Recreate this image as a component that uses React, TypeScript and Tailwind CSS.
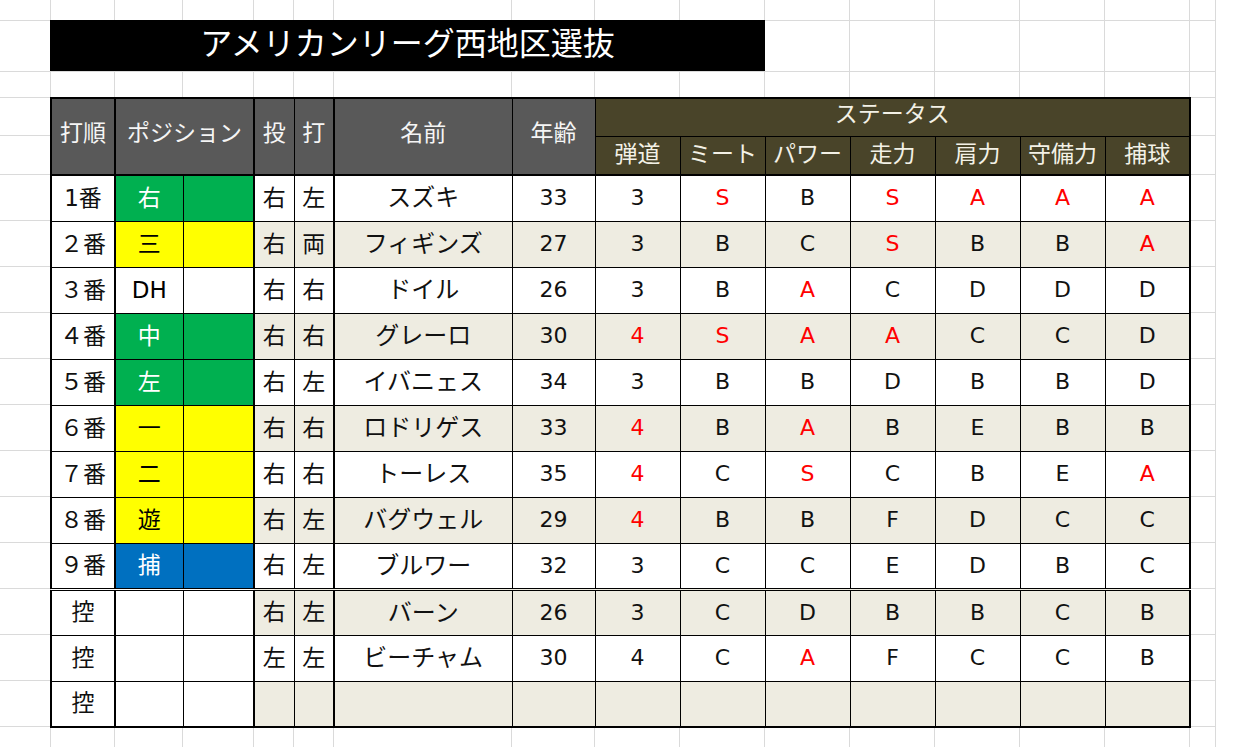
import React from "react";

type Row = {
  order: string;
  pos: string;
  posCls: string;
  th: string;
  bat: string;
  name: string;
  age: string;
  stats: string;
};

const rows: Row[] = [
  { order: "1番", pos: "右", posCls: "bg-[#00b050] text-white", th: "右", bat: "左", name: "スズキ", age: "33", stats: "3 S* B S* A* A* A*" },
  { order: "２番", pos: "三", posCls: "bg-[#ffff00] text-black", th: "右", bat: "両", name: "フィギンズ", age: "27", stats: "3 B C S* B B A*" },
  { order: "３番", pos: "DH", posCls: "bg-white text-black", th: "右", bat: "右", name: "ドイル", age: "26", stats: "3 B A* C D D D" },
  { order: "４番", pos: "中", posCls: "bg-[#00b050] text-white", th: "右", bat: "右", name: "グレーロ", age: "30", stats: "4* S* A* A* C C D" },
  { order: "５番", pos: "左", posCls: "bg-[#00b050] text-white", th: "右", bat: "左", name: "イバニェス", age: "34", stats: "3 B B D B B D" },
  { order: "６番", pos: "一", posCls: "bg-[#ffff00] text-black", th: "右", bat: "右", name: "ロドリゲス", age: "33", stats: "4* B A* B E B B" },
  { order: "７番", pos: "二", posCls: "bg-[#ffff00] text-black", th: "右", bat: "右", name: "トーレス", age: "35", stats: "4* C S* C B E A*" },
  { order: "８番", pos: "遊", posCls: "bg-[#ffff00] text-black", th: "右", bat: "左", name: "バグウェル", age: "29", stats: "4* B B F D C C" },
  { order: "９番", pos: "捕", posCls: "bg-[#0070c0] text-white", th: "右", bat: "左", name: "ブルワー", age: "32", stats: "3 C C E D B C" },
  { order: "控", pos: "", posCls: "bg-white", th: "右", bat: "左", name: "バーン", age: "26", stats: "3 C D B B C B" },
  { order: "控", pos: "", posCls: "bg-white", th: "左", bat: "左", name: "ビーチャム", age: "30", stats: "4 C A* F C C B" },
  { order: "控", pos: "", posCls: "bg-white", th: "", bat: "", name: "", age: "", stats: "" },
];

const colX = [50, 114, 182, 253, 293, 333, 511, 594, 679, 764, 849, 934, 1019, 1104, 1189, 1215];
const rowY = [20, 71, 97, 135, 174, 220, 266, 312, 358, 404, 450, 496, 542, 588, 634, 680, 726, 772];

const subHeads = ["弾道", "ミート", "パワー", "走力", "肩力", "守備力", "捕球"];

function GridLines() {
  return (
    <svg className="absolute inset-0" width={1243} height={747}>
      {colX.map((x) => (
        <line key={"v" + x} x1={x + 0.5} y1={0} x2={x + 0.5} y2={747} stroke="#dadada" strokeWidth={1} />
      ))}
      {rowY.map((y) => (
        <line key={"h" + y} x1={0} y1={y + 0.5} x2={1215} y2={y + 0.5} stroke="#dadada" strokeWidth={1} />
      ))}
    </svg>
  );
}

export default function App() {
  const font = { fontFamily: '"DejaVu Sans", "Noto Sans CJK JP", sans-serif' };
  return (
    <div className="relative w-[1243px] h-[747px] bg-white overflow-hidden text-[#111]" style={font}>
      <GridLines />
      <div className="relative pt-[20px] pl-[50px]">
        <div className="w-[715px] h-[51px] bg-black text-white text-[32px] flex items-center justify-center leading-none pb-[4px]">
          アメリカンリーグ西地区選抜
        </div>
        <table className="mt-[26px] w-[1139px] table-fixed border-collapse border-2 border-black">
          <colgroup>
            <col className="w-[64px]" />
            <col className="w-[68px]" />
            <col className="w-[71px]" />
            <col className="w-[40px]" />
            <col className="w-[40px]" />
            <col className="w-[178px]" />
            <col className="w-[83px]" />
            <col className="w-[85px]" />
            <col className="w-[85px]" />
            <col className="w-[85px]" />
            <col className="w-[85px]" />
            <col className="w-[85px]" />
            <col className="w-[85px]" />
            <col className="w-[85px]" />
          </colgroup>
          <thead className="leading-none">
            <tr className="h-[38px]">
              <th rowSpan={2} className="p-0 bg-[#595959] text-[#f5f5f5] text-[23px] font-normal border border-black border-r-2 border-b-2 pb-[6px] whitespace-nowrap">打順</th>
              <th rowSpan={2} colSpan={2} className="p-0 bg-[#595959] text-[#f5f5f5] text-[23px] font-normal border border-black border-r-2 border-b-2 pb-[6px] whitespace-nowrap">ポジション</th>
              <th rowSpan={2} className="p-0 bg-[#595959] text-[#f5f5f5] text-[23px] font-normal border border-black border-b-2 pb-[6px]">投</th>
              <th rowSpan={2} className="p-0 bg-[#595959] text-[#f5f5f5] text-[23px] font-normal border border-black border-r-2 border-b-2 pb-[6px]">打</th>
              <th rowSpan={2} className="p-0 bg-[#595959] text-[#f5f5f5] text-[23px] font-normal border border-black border-b-2 pb-[6px]">名前</th>
              <th rowSpan={2} className="p-0 bg-[#595959] text-[#f5f5f5] text-[23px] font-normal border border-black border-b-2 pb-[6px]">年齢</th>
              <th colSpan={7} className="p-0 bg-[#494429] text-[#f3f1e6] text-[23px] font-normal border border-black pb-[6px]">ステータス</th>
            </tr>
            <tr className="h-[39px]">
              {subHeads.map((s) => (
                <th key={s} className="p-0 bg-[#494429] text-[#f3f1e6] text-[23px] font-normal border border-black border-b-2 pb-[2px] whitespace-nowrap">{s}</th>
              ))}
            </tr>
          </thead>
          <tbody className="leading-none">
            {rows.map((r, i) => {
              const beige = i % 2 === 1 ? "bg-[#eeece1]" : "bg-white";
              const bottom = i === 8 ? "border-b-[3px] [border-bottom-style:double]" : "";
              const stats = r.stats ? r.stats.split(" ") : ["", "", "", "", "", "", ""];
              return (
                <tr key={i} className="h-[46px] text-[22px]">
                  <td className={`p-0 bg-white text-center text-[23px] border border-black border-r-2 whitespace-nowrap ${bottom}`}>{r.order}</td>
                  <td className={`p-0 ${r.posCls} text-center text-[23px] border border-black ${bottom}`}>{r.pos}</td>
                  <td className={`p-0 ${r.posCls} border border-black border-r-2 ${bottom}`}></td>
                  <td className={`p-0 ${beige} text-center text-[23px] border border-black ${bottom}`}>{r.th}</td>
                  <td className={`p-0 ${beige} text-center text-[23px] border border-black border-r-2 ${bottom}`}>{r.bat}</td>
                  <td className={`p-0 ${beige} text-center text-[24px] border border-black whitespace-nowrap ${bottom}`}>{r.name}</td>
                  <td className={`p-0 ${beige} text-center border border-black ${bottom}`}>{r.age}</td>
                  {stats.map((s, j) => {
                    const red = s.endsWith("*");
                    return (
                      <td key={j} className={`p-0 ${beige} text-center border border-black ${red ? "text-[#ff0000]" : ""} ${bottom}`}>
                        {s.replace("*", "")}
                      </td>
                    );
                  })}
                </tr>
              );
            })}
          </tbody>
        </table>
      </div>
    </div>
  );
}
